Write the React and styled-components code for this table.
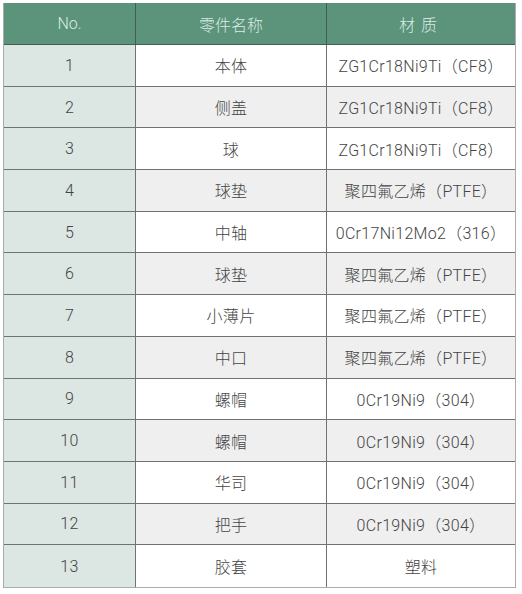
import styled, { createGlobalStyle } from "styled-components";

const GlobalStyle = createGlobalStyle`
  html, body {
    margin: 0;
    padding: 0;
    background: #ffffff;
  }
  body {
    font-family: Roboto, "Noto Sans CJK SC", "Noto Sans", sans-serif;
  }
`;

const Page = styled.div`
  padding: 3px 0 0 3px;
`;

const Sheet = styled.div`
  width: 513px;
  height: 585px;
  display: grid;
  grid-template-columns: 132px 191px 1fr;
  grid-template-rows: 42px repeat(13, 1fr);
  border: 1px solid #a9aeac;
  border-top: none;
  box-sizing: border-box;
`;

const HeadCell = styled.div`
  display: flex;
  align-items: center;
  justify-content: center;
  background: #5c937b;
  color: #d9ece2;
  font-size: 16px;
  font-weight: 300;
  letter-spacing: ${(p) => (p.$spaced ? "6px" : "0")};
  border-bottom: 1px solid #3e5f51;
  border-right: ${(p) => (p.$last ? "none" : "1px solid #3e5f51")};
`;

const Cell = styled.div`
  display: flex;
  align-items: center;
  justify-content: center;
  background: ${(p) => (p.$first ? "#dce6e2" : p.$even ? "#efefef" : "#ffffff")};
  color: #444444;
  font-size: 16px;
  font-weight: 300;
  letter-spacing: 0.3px;
  border-bottom: ${(p) => (p.$lastRow ? "none" : "1px solid #6f7472")};
  border-right: ${(p) => (p.$last ? "none" : "1px solid #6f7472")};
`;

const parts = [
  ["1", "本体", "ZG1Cr18Ni9Ti（CF8）"],
  ["2", "侧盖", "ZG1Cr18Ni9Ti（CF8）"],
  ["3", "球", "ZG1Cr18Ni9Ti（CF8）"],
  ["4", "球垫", "聚四氟乙烯（PTFE）"],
  ["5", "中轴", "0Cr17Ni12Mo2（316）"],
  ["6", "球垫", "聚四氟乙烯（PTFE）"],
  ["7", "小薄片", "聚四氟乙烯（PTFE）"],
  ["8", "中口", "聚四氟乙烯（PTFE）"],
  ["9", "螺帽", "0Cr19Ni9（304）"],
  ["10", "螺帽", "0Cr19Ni9（304）"],
  ["11", "华司", "0Cr19Ni9（304）"],
  ["12", "把手", "0Cr19Ni9（304）"],
  ["13", "胶套", "塑料"],
];

export default function App() {
  return (
    <Page>
      <GlobalStyle />
      <Sheet>
        <HeadCell>No.</HeadCell>
        <HeadCell>零件名称</HeadCell>
        <HeadCell $last $spaced>材质</HeadCell>
        {parts.map(([no, name, mat], i) => {
          const even = i % 2 === 1;
          const lastRow = i === parts.length - 1;
          return [
            <Cell key={no + "a"} $first $lastRow={lastRow}>{no}</Cell>,
            <Cell key={no + "b"} $even={even} $lastRow={lastRow}>{name}</Cell>,
            <Cell key={no + "c"} $even={even} $lastRow={lastRow} $last>{mat}</Cell>,
          ];
        })}
      </Sheet>
    </Page>
  );
}
